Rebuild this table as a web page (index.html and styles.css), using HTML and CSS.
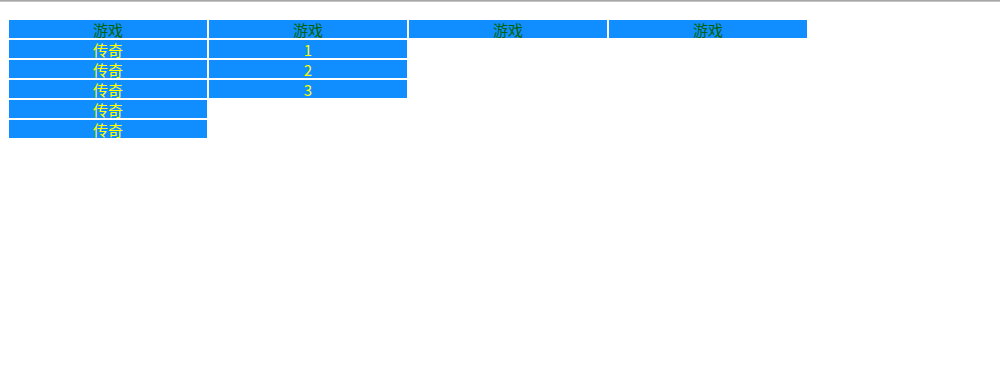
FILE: index.html
```html
<!DOCTYPE html>
<html lang="zh">
<head>
<meta charset="utf-8">
<title>游戏</title>
<link rel="stylesheet" href="styles.css">
</head>
<body>
<div class="topbar"></div>
<div class="page">
  <div class="grid">
    <ul class="col">
      <li class="head">游戏</li>
      <li>传奇</li>
      <li>传奇</li>
      <li>传奇</li>
      <li>传奇</li>
      <li>传奇</li>
    </ul>
    <ul class="col">
      <li class="head">游戏</li>
      <li>1</li>
      <li>2</li>
      <li>3</li>
    </ul>
    <ul class="col">
      <li class="head">游戏</li>
    </ul>
    <ul class="col">
      <li class="head">游戏</li>
    </ul>
  </div>
</div>
</body>
</html>
```
FILE: styles.css
```css
html, body {
  margin: 0;
  padding: 0;
  background: #fff;
}
.topbar {
  height: 1px;
  background: #a8a8a8;
  border-bottom: 1px solid #c4c4c4;
}
.page {
  padding: 18px 0 0 9px;
}
.grid {
  display: flex;
  align-items: flex-start;
  gap: 2px;
}
.col {
  list-style: none;
  margin: 0;
  padding: 0;
  display: flex;
  flex-direction: column;
  gap: 2px;
  width: 198px;
}
.col li {
  height: 18px;
  line-height: 19px;
  background: #108dff;
  color: #ffff00;
  text-align: center;
  font-family: "Noto Sans CJK SC", "DejaVu Sans", sans-serif;
  font-size: 15px;
}
.col li.head {
  color: #006400;
}
```
